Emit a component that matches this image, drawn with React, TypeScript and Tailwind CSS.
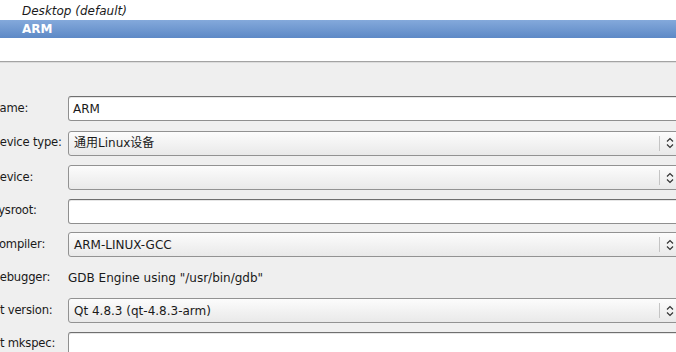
import { ReactNode } from "react";

const font = { fontFamily: '"DejaVu Sans", "Noto Sans CJK SC", sans-serif' };

function Label({ children }: { children: ReactNode }) {
  return (
    <div className="flex h-[25px] w-[77px] shrink-0 items-center text-[11.6px] tracking-[-0.2px] text-[#1a1a1a]">
      {children}
    </div>
  );
}

function TextField({ value }: { value?: string }) {
  return (
    <div className="flex h-[25px] flex-1 items-center rounded-[3px] border border-[#8f8f8f] border-t-[#6f6f6f] bg-white pl-[4px] text-[12px] text-[#1a1a1a] shadow-[inset_0_1px_0_#e6e6e6]">
      {value}
    </div>
  );
}

function Combo({ value }: { value?: string }) {
  return (
    <div className="flex h-[25px] flex-1 items-center rounded-[3px] border border-[#929292] bg-gradient-to-b from-[#fcfcfc] to-[#e9e9e9] text-[12px] text-[#1a1a1a]">
      <span className="flex-1 pl-[5px]">{value}</span>
      <div className="flex h-full w-[24px] items-center py-[4px]">
        <div className="h-full w-px bg-[#c4c4c4]" />
        <svg className="ml-[6px]" width="8" height="12" viewBox="0 0 8 12">
          <path d="M1 4.5 L4 1.5 L7 4.5" fill="none" stroke="#333" strokeWidth="1.2" />
          <path d="M1 7.5 L4 10.5 L7 7.5" fill="none" stroke="#333" strokeWidth="1.2" />
        </svg>
      </div>
    </div>
  );
}

function Row({ label, children }: { label: string; children: ReactNode }) {
  return (
    <div className="flex items-center">
      <Label>{label}</Label>
      {children}
    </div>
  );
}

export default function App() {
  return (
    <div className="h-[352px] w-[676px] overflow-hidden bg-[#efefef]" style={font}>
      <div className="h-[62px] border-b border-[#a3a3a3] bg-white pt-[2px]">
        <div className="flex h-[18px] items-center pl-[22px] text-[12px] italic text-[#1a1a1a]">
          Desktop (default)
        </div>
        <div className="flex h-[18px] items-center bg-gradient-to-b from-[#84a9db] to-[#5d89c6] pl-[22px] text-[12px] font-bold text-white">
          ARM
        </div>
      </div>
      <div className="h-px bg-[#dcdcdc]" />
      <div className="-ml-[9px] -mr-[8px] flex flex-col gap-[8.5px] pt-[33px]">
        <Row label="Name:">
          <TextField value="ARM" />
        </Row>
        <div className="mt-[1px]">
          <Row label="Device type:">
            <Combo value="通用Linux设备" />
          </Row>
        </div>
        <div className="mt-[1px]">
          <Row label="Device:">
            <Combo />
          </Row>
        </div>
        <Row label="Sysroot:">
          <TextField />
        </Row>
        <Row label="Compiler:">
          <Combo value="ARM-LINUX-GCC" />
        </Row>
        <Row label="Debugger:">
          <div className="flex h-[25px] flex-1 items-center text-[12px] text-[#1a1a1a]">
            GDB Engine using "/usr/bin/gdb"
          </div>
        </Row>
        <div className="-mt-[1px]">
          <Row label="Qt version:">
            <Combo value="Qt 4.8.3 (qt-4.8.3-arm)" />
          </Row>
        </div>
        <Row label="Qt mkspec:">
          <TextField />
        </Row>
      </div>
    </div>
  );
}
